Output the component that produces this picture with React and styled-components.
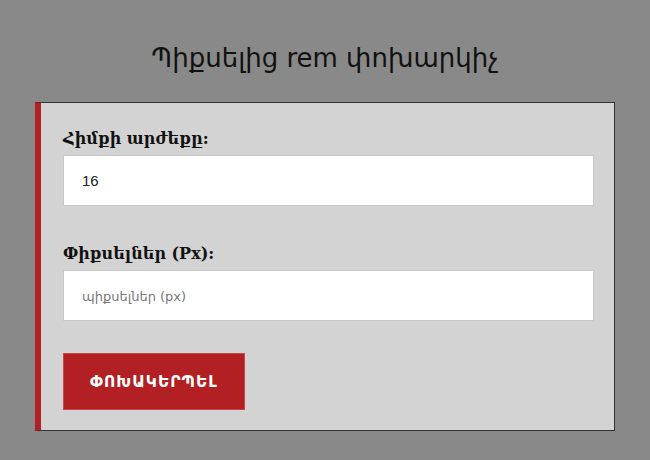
import styled, { createGlobalStyle } from "styled-components";

const GlobalStyle = createGlobalStyle`
  html, body {
    margin: 0;
    padding: 0;
    background: #898989;
    font-family: "DejaVu Sans", "Noto Sans", sans-serif;
  }
`;

const Page = styled.div`
  display: flex;
  flex-direction: column;
  align-items: center;
  padding-top: 39px;
  height: 460px;
  box-sizing: border-box;
`;

const Title = styled.h1`
  margin: 0 0 25px;
  font-size: 26px;
  font-weight: normal;
  color: #111;
  line-height: 38px;
`;

const Card = styled.form`
  box-sizing: border-box;
  width: 580px;
  background: #d3d3d3;
  border: 1px solid #333;
  border-left: 6px solid #b22024;
  padding: 24px 20px 20px 22px;
  display: flex;
  flex-direction: column;
`;

const Field = styled.div`
  display: flex;
  flex-direction: column;
  margin-bottom: ${(p) => p.$gap}px;
`;

const Label = styled.label`
  font-family: "DejaVu Serif", "Liberation Serif", serif;
  font-weight: bold;
  font-size: 16px;
  color: #111;
  line-height: 24px;
  margin-bottom: 4px;
`;

const Input = styled.input`
  box-sizing: border-box;
  height: 51px;
  width: 100%;
  border: 1px solid #c8c8c8;
  background: #fff;
  padding: 0 18px;
  font-family: "Liberation Sans", "DejaVu Sans", sans-serif;
  font-size: 15px;
  color: #222;
  outline: none;
  &::placeholder {
    font-family: "DejaVu Sans", sans-serif;
    font-size: 13px;
    color: #777;
  }
`;

const Button = styled.button`
  align-self: flex-start;
  width: 182px;
  height: 57px;
  background: #b22024;
  border: 1px solid #c44;
  color: #fff;
  font-family: "DejaVu Sans", "Noto Sans", sans-serif;
  font-weight: bold;
  font-size: 15.5px;
  letter-spacing: 1px;
  cursor: pointer;
`;

export default function App() {
  return (
    <>
      <GlobalStyle />
      <Page>
        <Title>Պիքսելից rem փոխարկիչ</Title>
        <Card onSubmit={(e) => e.preventDefault()}>
          <Field $gap={36}>
            <Label>Հիմքի արժեքը:</Label>
            <Input defaultValue="16" />
          </Field>
          <Field $gap={32}>
            <Label>Փիքսելներ (Px):</Label>
            <Input placeholder="պիքսելներ (px)" />
          </Field>
          <Button type="submit">ՓՈԽԱԿԵՐՊԵԼ</Button>
        </Card>
      </Page>
    </>
  );
}
